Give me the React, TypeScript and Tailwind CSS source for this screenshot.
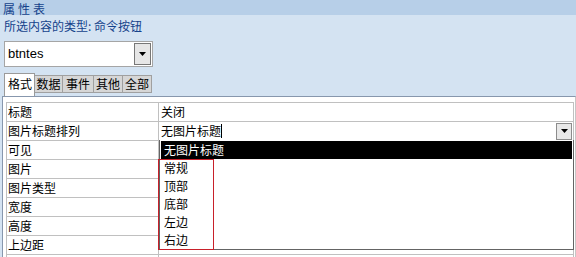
import React from "react";

const rows = ["标题", "图片标题排列", "可见", "图片", "图片类型", "宽度", "高度", "上边距", ""];
const tabs = [
  { label: "数据", w: "w-[28px]" },
  { label: "事件", w: "w-[31px]" },
  { label: "其他", w: "w-[29px]" },
  { label: "全部", w: "w-[29px]" },
];
const options = ["常规", "顶部", "底部", "左边", "右边"];

function Arrow() {
  return (
    <svg width="7" height="4" viewBox="0 0 7 4">
      <polygon points="0,0 7,0 3.5,4" fill="#000" />
    </svg>
  );
}

export default function App() {
  return (
    <div className="w-[576px] h-[257px] overflow-hidden bg-[#d4e3f2] text-[12px] text-black font-['Noto_Sans_CJK_SC',sans-serif]">
      {/* title bar */}
      <div className="h-[15px] bg-[#b7cfe8] pl-[3px] pt-[3px] text-[12px] leading-[12px] tracking-[3px] text-[#15428b]">属性表</div>
      <div className="h-[20px] pl-[4px] pt-[4px] leading-[14px] text-[#15428b]">所选内容的类型: 命令按钮</div>

      {/* object combobox */}
      <div className="mt-[6px] ml-[4px] w-[149px] h-[26px] border border-[#a5a5a5] bg-white flex items-center">
        <span className="pl-[3px] text-[13px] font-['Liberation_Sans',sans-serif]">btntes</span>
        <div className="ml-auto mr-[1px] w-[17px] h-[22px] border border-[#777] bg-[#e6e6e6] flex items-center justify-center">
          <Arrow />
        </div>
      </div>

      {/* tabs */}
      <div className="mt-[6px] ml-[4px] h-[23px] flex items-start">
        <div className="w-[31px] h-[23px] bg-white border border-b-0 border-[#9a9a9a] pl-[3px] pt-[3px] leading-[14px]">格式</div>
        {tabs.map((t) => (
          <div
            key={t.label}
            className={`${t.w} mt-[2px] h-[18px] bg-[#d6d6d6] border border-l-0 border-[#a0a0a0] text-center leading-[16px]`}
          >
            {t.label}
          </div>
        ))}
      </div>

      {/* property grid */}
      <div className="ml-[2px] w-[574px] h-[161px] bg-white border-t border-l border-r border-t-[#8797ad] border-l-[#8797ad] border-r-[#c6c6c6] pl-[3px] pt-[5px]">
        <div className="relative w-[568px] border-t border-l border-r border-[#c0c0c0]">
          {rows.map((r, i) => (
            <div key={i} className="h-[19px] flex border-b border-[#c0c0c0]">
              <div className="w-[152px] border-r border-[#c0c0c0] pl-[1px] leading-[18px]">{r}</div>
              <div className="flex-1 flex items-center pl-[2px] leading-[18px]">
                {i === 0 && "关闭"}
                {i === 1 && (
                  <>
                    <span>无图片标题</span>
                    <span className="w-[1px] h-[14px] bg-black" />
                    <div className="ml-auto mr-[1px] w-[16px] h-[17px] border border-[#8c8c8c] bg-[#e8e8e8] flex items-center justify-center">
                      <Arrow />
                    </div>
                  </>
                )}
              </div>
            </div>
          ))}

          {/* open dropdown list */}
          <div className="absolute left-[152px] top-[37px] w-[415px] h-[110px] bg-white border border-t-0 border-[#646464] p-[1px]">
            <div className="h-[18px] bg-black text-white pl-[3px] leading-[18px]">无图片标题</div>
            {options.map((o) => (
              <div key={o} className="h-[18px] pl-[3px] leading-[18px]">{o}</div>
            ))}
          </div>

          {/* red annotation box */}
          <div className="absolute left-[151px] top-[56px] w-[56px] h-[91px] border border-[#c8202a]" />
        </div>
      </div>
    </div>
  );
}
